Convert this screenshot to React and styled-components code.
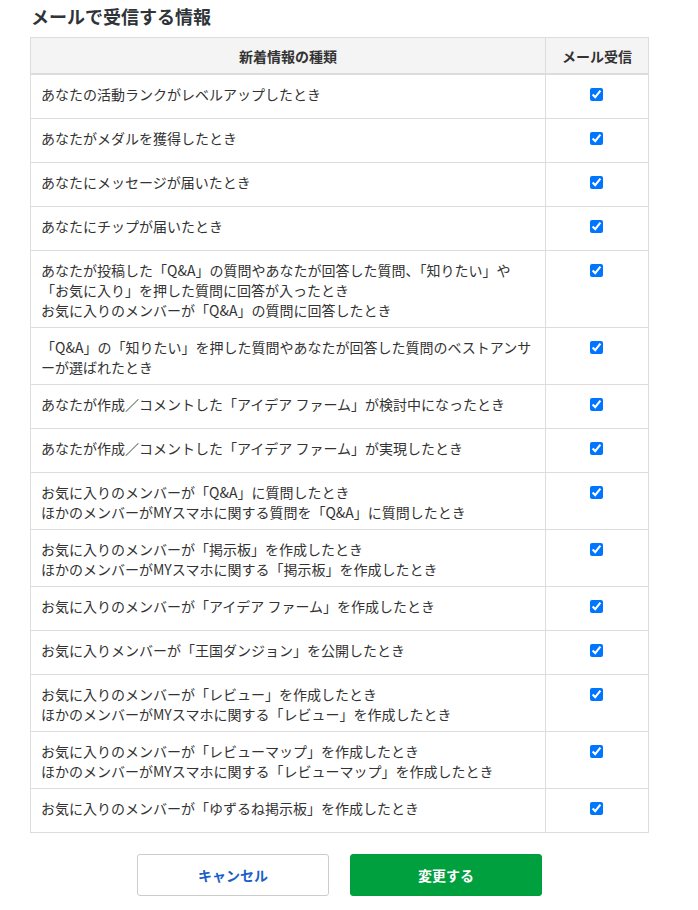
import React from 'react';
import styled, { createGlobalStyle } from 'styled-components';

const GlobalStyle = createGlobalStyle`
  html, body {
    margin: 0;
    padding: 0;
    background: #fff;
  }
  body {
    font-family: "Noto Sans CJK JP", "Noto Sans", sans-serif;
    color: #333;
  }
`;

const items = [
  ['あなたの活動ランクがレベルアップしたとき'],
  ['あなたがメダルを獲得したとき'],
  ['あなたにメッセージが届いたとき'],
  ['あなたにチップが届いたとき'],
  [
    'あなたが投稿した「Q&A」の質問やあなたが回答した質問、「知りたい」や',
    '「お気に入り」を押した質問に回答が入ったとき',
    'お気に入りのメンバーが「Q&A」の質問に回答したとき',
  ],
  [
    '「Q&A」の「知りたい」を押した質問やあなたが回答した質問のベストアンサ',
    'ーが選ばれたとき',
  ],
  ['あなたが作成／コメントした「アイデア ファーム」が検討中になったとき'],
  ['あなたが作成／コメントした「アイデア ファーム」が実現したとき'],
  [
    'お気に入りのメンバーが「Q&A」に質問したとき',
    'ほかのメンバーがMYスマホに関する質問を「Q&A」に質問したとき',
  ],
  [
    'お気に入りのメンバーが「掲示板」を作成したとき',
    'ほかのメンバーがMYスマホに関する「掲示板」を作成したとき',
  ],
  ['お気に入りのメンバーが「アイデア ファーム」を作成したとき'],
  ['お気に入りメンバーが「王国ダンジョン」を公開したとき'],
  [
    'お気に入りのメンバーが「レビュー」を作成したとき',
    'ほかのメンバーがMYスマホに関する「レビュー」を作成したとき',
  ],
  [
    'お気に入りのメンバーが「レビューマップ」を作成したとき',
    'ほかのメンバーがMYスマホに関する「レビューマップ」を作成したとき',
  ],
  ['お気に入りのメンバーが「ゆずるね掲示板」を作成したとき'],
];

const Page = styled.div`
  width: 619px;
  padding: 4px 0 0 30px;
`;

const Title = styled.h2`
  margin: 0 0 9px 1px;
  font-size: 18px;
  line-height: 24px;
  font-weight: 700;
  color: #2f3438;
`;

const Table = styled.div`
  display: grid;
  grid-template-columns: 515px 1fr;
  border-left: 1px solid #ddd;
  border-top: 1px solid #ddd;
`;

const HeadCell = styled.div`
  height: 35px;
  display: flex;
  align-items: center;
  justify-content: center;
  background: #f4f4f4;
  border-right: 1px solid #ddd;
  border-bottom: 2px solid #ddd;
  font-size: 14px;
  font-weight: 700;
  color: #333;
`;

const TextCell = styled.div`
  min-height: 27px;
  padding: 9px 10px 7px;
  border-right: 1px solid #ddd;
  border-bottom: 1px solid #ddd;
  font-size: 14px;
  line-height: 20px;
  color: #333;
  white-space: nowrap;
`;

const Line = styled.div`
  height: 20px;
`;

const CheckCell = styled.div`
  min-height: 27px;
  padding: 9px 0 7px;
  display: flex;
  justify-content: center;
  align-items: flex-start;
  border-right: 1px solid #ddd;
  border-bottom: 1px solid #ddd;
`;

const CheckWrap = styled.div`
  height: 20px;
  display: flex;
  align-items: center;
`;

const Check = styled.input`
  width: 13px;
  height: 13px;
  margin: 0 1px 0 0;
  accent-color: #0075ff;
`;

const Actions = styled.div`
  display: flex;
  justify-content: center;
  gap: 21px;
  margin-top: 21px;
`;

const Button = styled.button`
  width: 192px;
  height: 42px;
  border-radius: 3px;
  font-family: inherit;
  font-size: 14px;
  font-weight: 700;
  cursor: pointer;
  border: 1px solid ${(p) => (p.$primary ? '#009d3e' : '#ccc')};
  background: ${(p) => (p.$primary ? '#00a03f' : '#fff')};
  color: ${(p) => (p.$primary ? '#fff' : '#1a5fc8')};
`;

export default function App() {
  return (
    <>
      <GlobalStyle />
      <Page>
        <Title>メールで受信する情報</Title>
        <Table>
          <HeadCell>新着情報の種類</HeadCell>
          <HeadCell>メール受信</HeadCell>
          {items.map((lines, i) => (
            <React.Fragment key={i}>
              <TextCell>
                {lines.map((l, j) => (
                  <Line key={j}>{l}</Line>
                ))}
              </TextCell>
              <CheckCell>
                <CheckWrap>
                  <Check type="checkbox" defaultChecked />
                </CheckWrap>
              </CheckCell>
            </React.Fragment>
          ))}
        </Table>
        <Actions>
          <Button type="button">キャンセル</Button>
          <Button type="button" $primary>変更する</Button>
        </Actions>
      </Page>
    </>
  );
}
